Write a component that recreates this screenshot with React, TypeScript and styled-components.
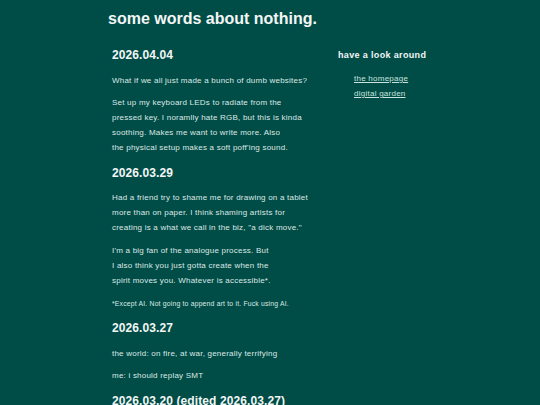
import { createGlobalStyle } from 'styled-components'
import styled from 'styled-components'

const GlobalStyle = createGlobalStyle`
   html, body {
      margin: 0;
      padding: 0;
      background: #004d47;
   }
   body {
      font-family: "Liberation Sans", Arial, sans-serif;
      color: #dde8e5;
   }
`

const Page = styled.div`
   padding: 9px 0 0 108px;
   height: 405px;
   overflow: hidden;
   box-sizing: border-box;
`

const Title = styled.h1`
   margin: 0;
   font-size: 16px;
   line-height: 20px;
   font-weight: 700;
   color: #f3f6f5;
`

const Columns = styled.div`
   display: grid;
   grid-template-columns: 215px 180px;
   column-gap: 12px;
   align-items: start;
   padding: 8.5px 0 0 4px;
`

const Main = styled.main`
   display: block;
`

const DateHeading = styled.h2`
   margin: 7.6px 0;
   font-size: 12px;
   line-height: 20px;
   font-weight: 700;
   letter-spacing: 0.1px;
   color: #f3f6f5;
   white-space: nowrap;
`

const Para = styled.p<{ $small?: boolean }>`
   margin: 7.6px 0;
   font-size: ${(p) => (p.$small ? '6.8px' : '8px')};
   line-height: 15px;
   letter-spacing: ${(p) => (p.$small ? '0.2px' : '0.22px')};
   white-space: nowrap;
`

const Side = styled.aside`
   display: flex;
   flex-direction: column;
   padding-top: 7.5px;
`

const SideHeading = styled.h3`
   margin: 0 0 0 -1px;
   font-size: 9px;
   line-height: 20px;
   font-weight: 700;
   letter-spacing: 0.35px;
   color: #f3f6f5;
`

const LinkList = styled.ul`
   list-style: none;
   margin: 0;
   padding: 6px 0 0 15px;
   font-size: 8px;
   line-height: 15px;
   display: flex;
   flex-direction: column;
`

const SideLink = styled.a`
   font-size: 8px;
   line-height: 15px;
   letter-spacing: 0.25px;
   color: #c9e2dd;
   text-decoration: underline;
   text-underline-offset: 1px;
`

const posts = [
   {
      date: '2026.04.04',
      paras: [
         ['What if we all just made a bunch of dumb websites?'],
         [
            'Set up my keyboard LEDs to radiate from the',
            'pressed key. I noramlly hate RGB, but this is kinda',
            'soothing. Makes me want to write more. Also',
            "the physical setup makes a soft poff'ing sound.",
         ],
      ],
   },
   {
      date: '2026.03.29',
      paras: [
         [
            'Had a friend try to shame me for drawing on a tablet',
            'more than on paper. I think shaming artists for',
            'creating is a what we call in the biz, "a dick move."',
         ],
         [
            "I'm a big fan of the analogue process. But",
            'I also think you just gotta create when the',
            'spirit moves you. Whatever is accessible*.',
         ],
      ],
      note: '*Except AI. Not going to append art to it. Fuck using AI.',
   },
   {
      date: '2026.03.27',
      paras: [
         ['the world: on fire, at war, generally terrifying'],
         ['me: i should replay SMT'],
      ],
   },
   {
      date: '2026.03.20 (edited 2026.03.27)',
      paras: [],
   },
]

const App = () => {
   return (
      <Page>
         <GlobalStyle />
         <Title>some words about nothing.</Title>
         <Columns>
            <Main>
               {posts.map((post) => (
                  <section key={post.date}>
                     <DateHeading>{post.date}</DateHeading>
                     {post.paras.map((lines, i) => (
                        <Para key={i}>
                           {lines.map((line, j) => (
                              <span key={j}>
                                 {line}
                                 {j < lines.length - 1 && <br />}
                              </span>
                           ))}
                        </Para>
                     ))}
                     {post.note && <Para $small>{post.note}</Para>}
                  </section>
               ))}
            </Main>
            <Side>
               <SideHeading>have a look around</SideHeading>
               <LinkList>
                  <li>
                     <SideLink href="#">the homepage</SideLink>
                  </li>
                  <li>
                     <SideLink href="#">digital garden</SideLink>
                  </li>
               </LinkList>
            </Side>
         </Columns>
      </Page>
   )
}

export default App
